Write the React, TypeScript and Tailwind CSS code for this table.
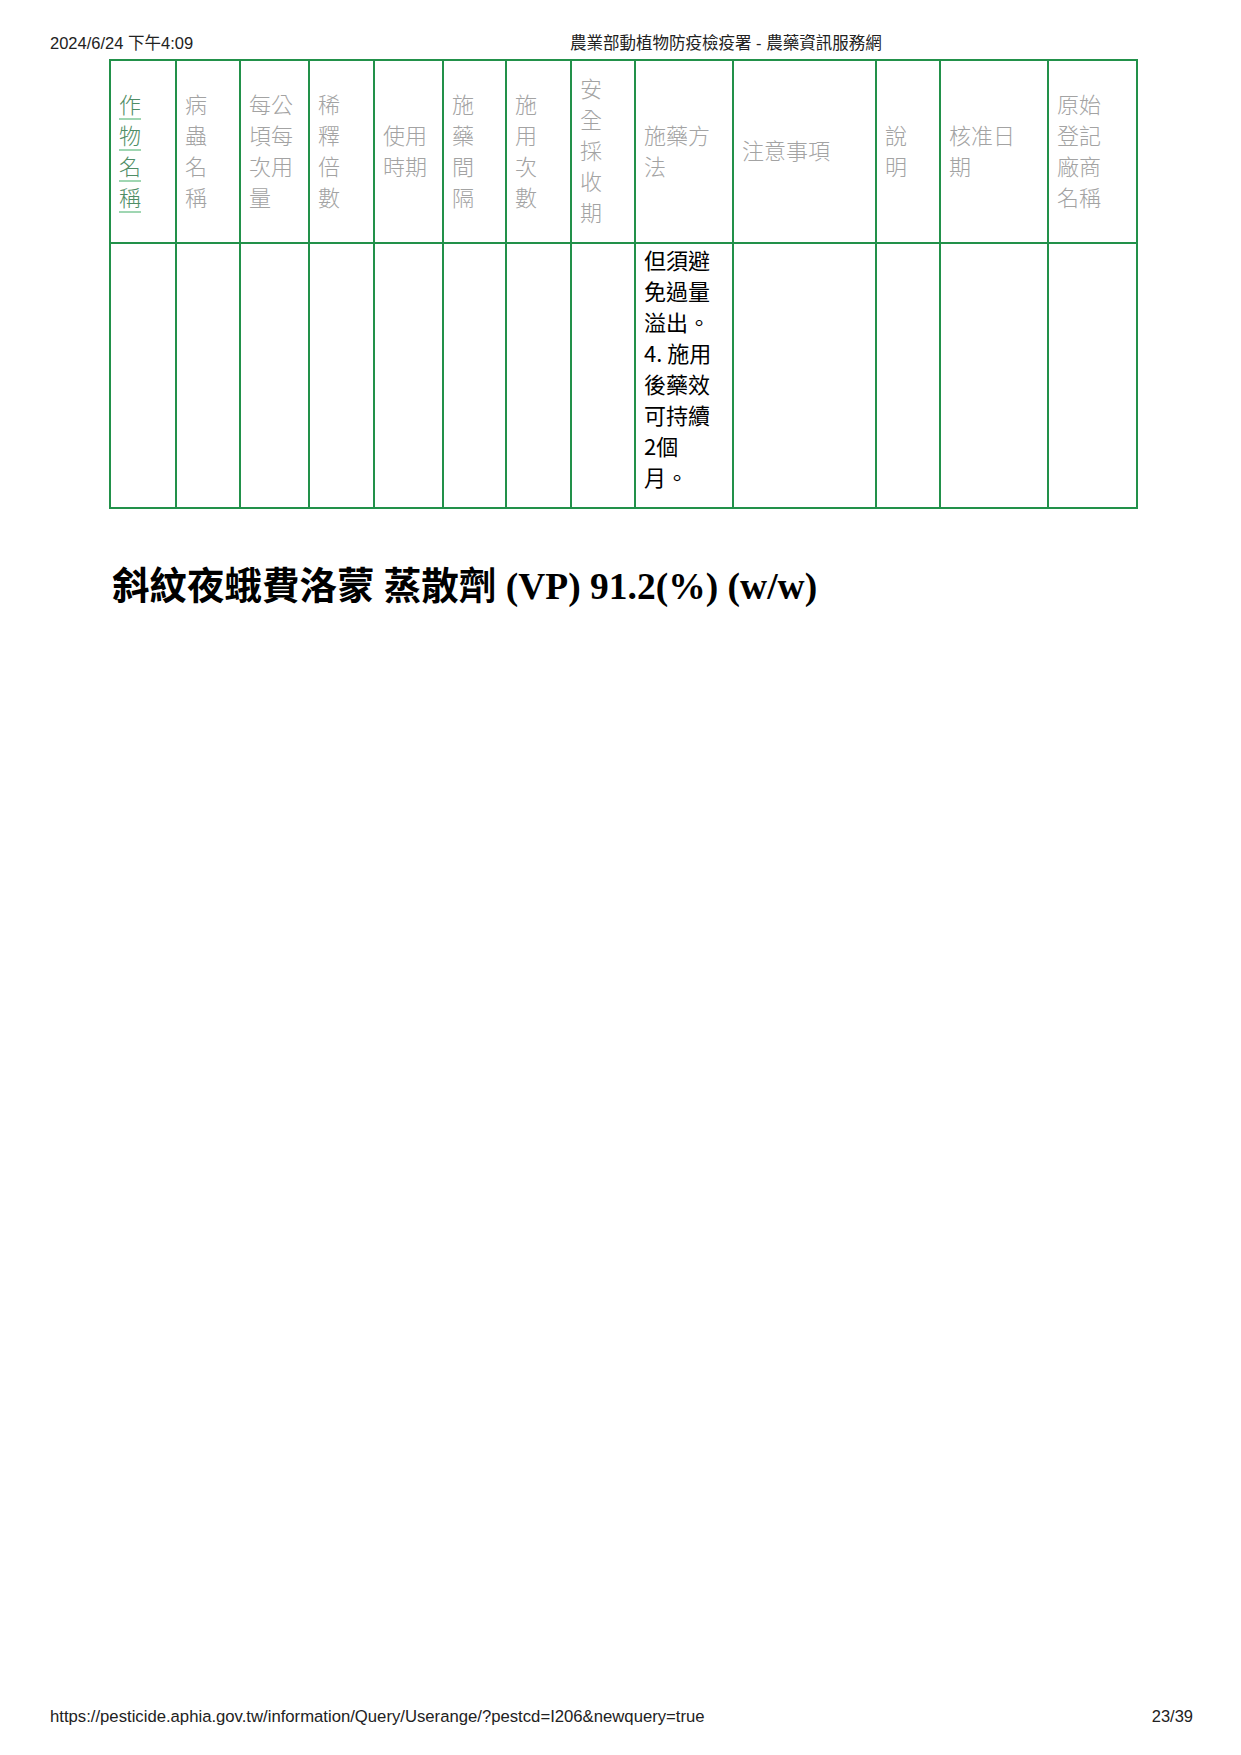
import React from "react";

const headers: { lines: string[]; link?: boolean }[] = [
  { lines: ["作", "物", "名", "稱"], link: true },
  { lines: ["病", "蟲", "名", "稱"] },
  { lines: ["每公", "頃每", "次用", "量"] },
  { lines: ["稀", "釋", "倍", "數"] },
  { lines: ["使用", "時期"] },
  { lines: ["施", "藥", "間", "隔"] },
  { lines: ["施", "用", "次", "數"] },
  { lines: ["安", "全", "採", "收", "期"] },
  { lines: ["施藥方", "法"] },
  { lines: ["注意事項"] },
  { lines: ["說", "明"] },
  { lines: ["核准日", "期"] },
  { lines: ["原始", "登記", "廠商", "名稱"] },
];

const colWidths = [
  "w-[66px]",
  "w-[64px]",
  "w-[69px]",
  "w-[65px]",
  "w-[69px]",
  "w-[63px]",
  "w-[65px]",
  "w-[64px]",
  "w-[98px]",
  "w-[143px]",
  "w-[64px]",
  "w-[108px]",
  "w-[89px]",
];

const bodyLines = ["但須避", "免過量", "溢出。", "4. 施用", "後藥效", "可持續", "2個", "月。"];

const sansFont = { fontFamily: '"Liberation Sans", "Noto Sans CJK TC", sans-serif' };

export default function App() {
  return (
    <div className="w-[1241px] h-[1755px] bg-white flex flex-col text-black">
      <div
        className="flex pt-[34px] pl-[50px] text-[16.5px] leading-[19px] text-[#222]"
        style={sansFont}
      >
        <div className="w-[520px] shrink-0">2024/6/24 下午4:09</div>
        <div>農業部動植物防疫檢疫署 - 農藥資訊服務網</div>
      </div>

      <div className="pl-[109px] mt-[6px]">
        <table
          className="table-fixed border-collapse w-[1027px] border-2 border-[#22914a] text-[22px] leading-[31px]"
          style={{ fontFamily: '"Noto Sans CJK TC", "Liberation Sans", sans-serif' }}
        >
          <colgroup>
            {colWidths.map((w, i) => (
              <col key={i} className={w} />
            ))}
          </colgroup>
          <thead>
            <tr className="h-[183px]">
              {headers.map((h, i) => (
                <th
                  key={i}
                  className="border-2 border-[#22914a] align-middle text-left font-light pl-2 pr-0 pt-0 pb-[4px]"
                >
                  {h.link ? (
                    <div className="flex flex-col items-start text-[#4f8d66]">
                      {h.lines.map((l, j) => (
                        <span
                          key={j}
                          className="underline decoration-[#9fd6b2] decoration-2 underline-offset-[5px]"
                        >
                          {l}
                        </span>
                      ))}
                    </div>
                  ) : (
                    <div className="flex flex-col items-start text-[#a3a3a3]">
                      {h.lines.map((l, j) => (
                        <span key={j}>{l}</span>
                      ))}
                    </div>
                  )}
                </th>
              ))}
            </tr>
          </thead>
          <tbody>
            <tr className="h-[265px]">
              {headers.map((_, i) => (
                <td
                  key={i}
                  className="border-2 border-[#22914a] align-top pl-2 pr-0 pt-0 pb-0"
                >
                  {i === 8 ? (
                    <div className="flex flex-col items-start text-black">
                      {bodyLines.map((l, j) => (
                        <span key={j}>{l}</span>
                      ))}
                    </div>
                  ) : null}
                </td>
              ))}
            </tr>
          </tbody>
        </table>
      </div>

      <h2
        className="mt-[56px] pl-[112px] text-[37.5px] leading-[44px] font-bold"
        style={{ fontFamily: '"Liberation Serif", "Noto Sans CJK TC", serif' }}
      >
        斜紋夜蛾費洛蒙 蒸散劑 (VP) 91.2(%) (w/w)
      </h2>

      <div
        className="mt-auto flex justify-between pl-[50px] pr-[48px] pb-[29px] text-[16.5px] leading-[19px] text-[#222]"
        style={sansFont}
      >
        <div className="text-[16.7px]">https://pesticide.aphia.gov.tw/information/Query/Userange/?pestcd=I206&amp;newquery=true</div>
        <div>23/39</div>
      </div>
    </div>
  );
}
